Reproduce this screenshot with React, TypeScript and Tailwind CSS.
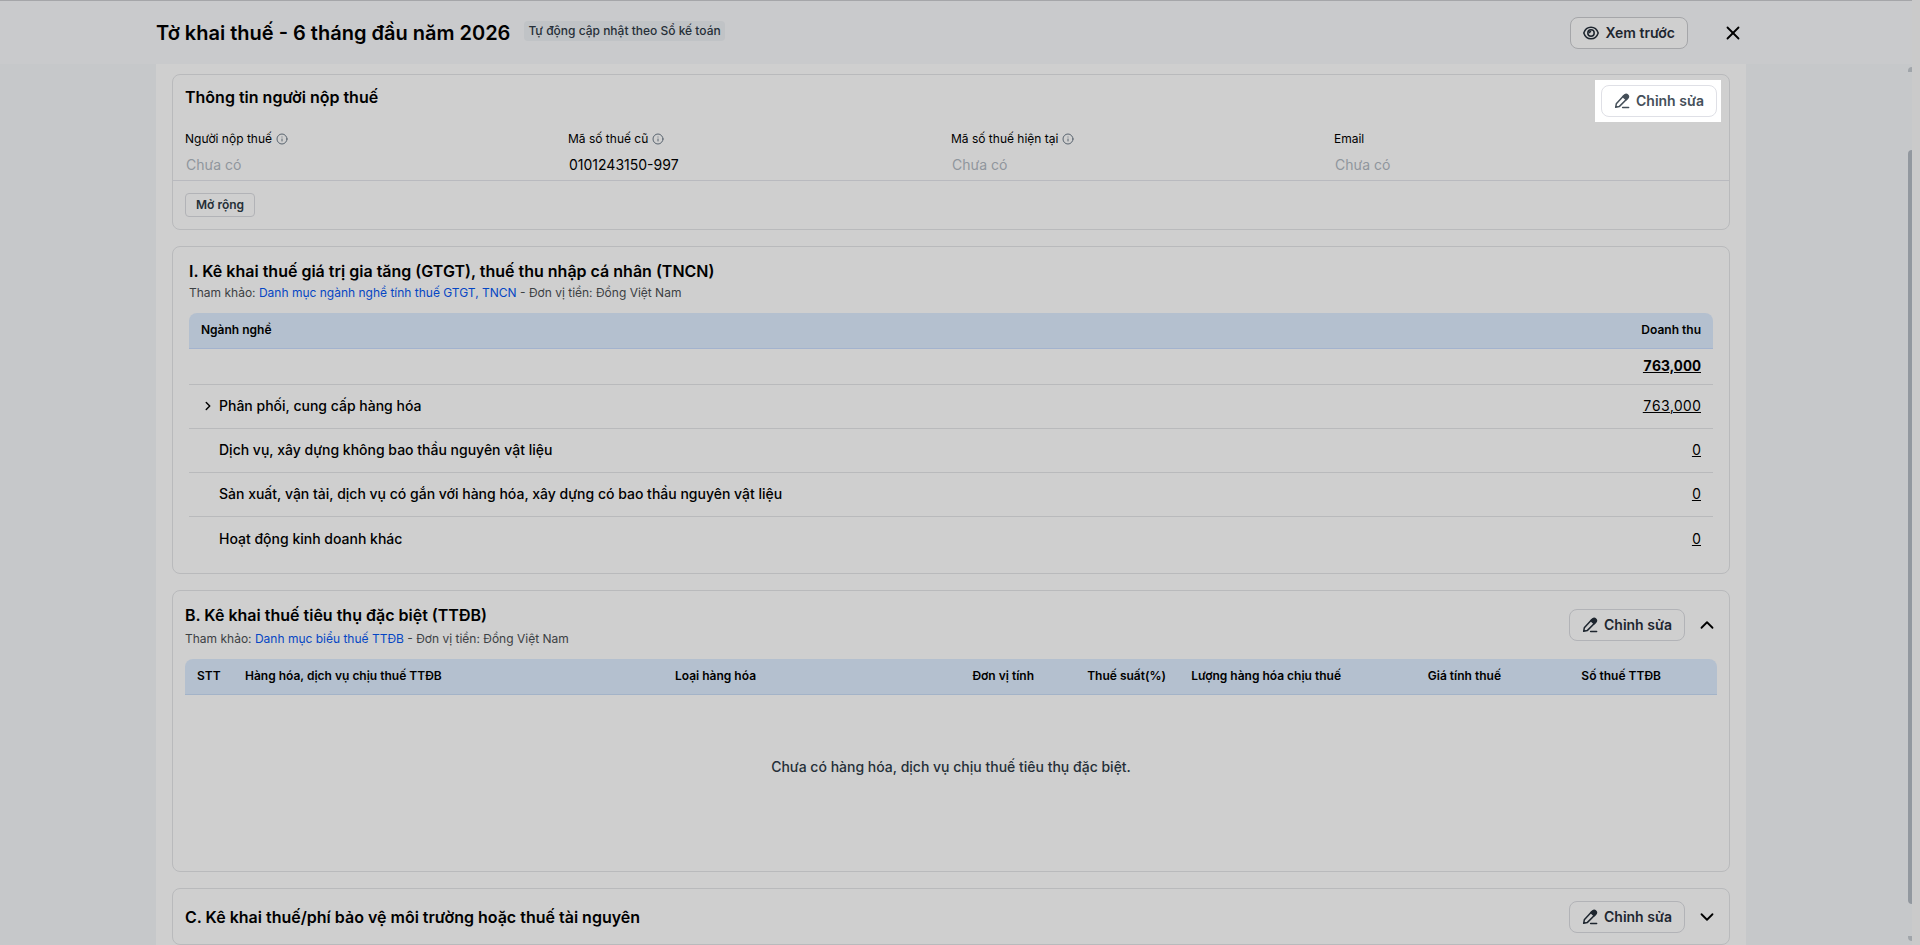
import React from "react";
import { ChevronDown, ChevronRight, ChevronUp, Info, X } from "lucide-react";

const fields = [
    { id: "taxpayer", label: "Người nộp thuế", value: "", info: true },
    { id: "old-code", label: "Mã số thuế cũ", value: "0101243150-997", info: true },
    { id: "new-code", label: "Mã số thuế hiện tại", value: "", info: true },
    { id: "email", label: "Email", value: "", info: false },
];

const industries = [
    { name: "Phân phối, cung cấp hàng hóa", revenue: "763,000", expandable: true },
    { name: "Dịch vụ, xây dựng không bao thầu nguyên vật liệu", revenue: "0", expandable: false },
    { name: "Sản xuất, vận tải, dịch vụ có gắn với hàng hóa, xây dựng có bao thầu nguyên vật liệu", revenue: "0", expandable: false },
    { name: "Hoạt động kinh doanh khác", revenue: "0", expandable: false },
];

const exciseColumns = [
    { title: "STT", style: "w-12 text-left pl-3" },
    { title: "Hàng hóa, dịch vụ chịu thuế TTĐB", style: "text-left pl-3" },
    { title: "Loại hàng hóa", style: "w-60 text-left pl-3" },
    { title: "Đơn vị tính", style: "w-[143px] text-right pr-3" },
    { title: "Thuế suất(%)", style: "w-[132px] text-right pr-3" },
    { title: "Lượng hàng hóa chịu thuế", style: "w-[175px] text-right pr-3" },
    { title: "Giá tính thuế", style: "w-40 text-right pr-3" },
    { title: "Số thuế TTĐB", style: "w-[204px] text-right pr-14" },
];

function PencilIcon() {
    return (
        <svg viewBox="0 0 16 16" className="size-4 shrink-0" fill="none" stroke="currentColor" strokeWidth="1.5" strokeLinejoin="round" strokeLinecap="round" aria-hidden="true">
            <path d="M1.7 14.3 2.3 10.8 9.9 2.6a2.2 2.2 0 0 1 3.2 0 2.2 2.2 0 0 1 0 3.1L5.2 13.6Z" />
            <path d="M9 3.6 10.7 2a2.2 2.2 0 0 1 3.2 3L12.2 6.7Z" fill="currentColor" />
            <path d="M8.6 14.6h6" />
        </svg>
    );
}

function EyeIcon() {
    return (
        <svg viewBox="0 0 16 16" className="size-4 shrink-0" fill="none" stroke="currentColor" strokeWidth="1.5" aria-hidden="true">
            <path d="M.8 8C2 4.300 4.800 2.200 8 2.200S14 4.300 15.200 8C14 11.700 11.200 13.800 8 13.800S2 11.700.8 8Z" />
            <circle cx="8" cy="8" r="3.2" />
            <path d="M6.3 8.3A1.9 1.9 0 0 1 8.2 6.3" />
        </svg>
    );
}

function EditButton({ active = false }: { active?: boolean }) {
    const tone = active ? "border-[#dfe0e6] bg-white text-[#454f59]" : "border-[#b2b3b7] text-[#1e262f]";
    return (
        <button type="button" className={`flex h-8 items-center gap-1.5 rounded-lg border px-3 text-sm font-semibold ${tone}`}>
            <PencilIcon />
            Chỉnh sửa
        </button>
    );
}

function Reference({ link }: { link: string }) {
    return (
        <p className="text-xs text-[#3c4043]">
            Tham khảo: <a href="#" className="text-[#0546c4]">{link}</a> - Đơn vị tiền: Đồng Việt Nam
        </p>
    );
}

function TaxpayerCard() {
    return (
        <section className="rounded-lg border border-[#b9babc]">
            <div className="flex h-12 items-start justify-between pl-3 pr-2">
                <h2 className="pt-2.5 text-base font-semibold">Thông tin người nộp thuế</h2>
                <div className="mt-[5px] bg-white py-[5px] pl-1.5 pr-1">
                    <EditButton active />
                </div>
            </div>
            <div className="grid grid-cols-4 border-b border-[#b9babf] px-3 pb-[5px] pt-1.5">
                {fields.map((f) => (
                    <div key={f.id}>
                        <label htmlFor={f.id} className="flex items-center gap-1 text-xs leading-5">
                            {f.label}
                            {f.info && <Info size={12} strokeWidth={2} className="text-[#59646f]" />}
                        </label>
                        <input
                            id={f.id}
                            readOnly
                            defaultValue={f.value}
                            placeholder="Chưa có"
                            className="mt-1.5 block h-5 w-full bg-transparent px-px text-sm outline-none placeholder:text-[#8f969d]"
                        />
                    </div>
                ))}
            </div>
            <div className="flex p-3">
                <button type="button" className="h-6 rounded border border-[#b2b3b7] px-2.5 text-xs font-semibold text-[#262f38]">
                    Mở rộng
                </button>
            </div>
        </section>
    );
}

function RevenueCard() {
    return (
        <section className="rounded-lg border border-[#b9babc] px-4 py-3">
            <div className="flex flex-col gap-0.5">
                <h2 className="text-base font-semibold">I. Kê khai thuế giá trị gia tăng (GTGT), thuế thu nhập cá nhân (TNCN)</h2>
                <Reference link="Danh mục ngành nghề tính thuế GTGT, TNCN" />
            </div>
            <table className="mt-3 w-full border-separate border-spacing-0">
                <thead>
                    <tr className="h-9 text-xs">
                        <th className="rounded-tl-lg border-b border-[#a3b3ce] bg-[#b4c0cf] px-3 pb-0.5 text-left font-semibold">Ngành nghề</th>
                        <th className="rounded-tr-lg border-b border-[#a3b3ce] bg-[#b4c0cf] px-3 pb-0.5 text-right font-semibold">Doanh thu</th>
                    </tr>
                </thead>
                <tbody className="text-sm">
                    <tr className="h-9">
                        <td className="border-b border-[#b9babc]" />
                        <td className="border-b border-[#b9babc] px-3 pb-0.5 text-right font-bold">
                            <a href="#" className="tabular-nums underline">763,000</a>
                        </td>
                    </tr>
                    {industries.map((row, index) => {
                        const line = index < industries.length - 1 ? "border-b border-[#b9babc] pb-0.5" : "";
                        return (
                            <tr key={row.name} className="h-11">
                                <td className={`pl-3 font-medium ${line}`}>
                                    <span className="flex items-center">
                                        <span className="flex w-[18px]">
                                            {row.expandable && <ChevronRight size={14} strokeWidth={2.5} />}
                                        </span>
                                        {row.name}
                                    </span>
                                </td>
                                <td className={`px-3 text-right ${line}`}>
                                    <a href="#" className="tabular-nums underline">{row.revenue}</a>
                                </td>
                            </tr>
                        );
                    })}
                </tbody>
            </table>
        </section>
    );
}

function ExciseCard() {
    return (
        <section className="rounded-lg border border-[#b9babc] px-3 pt-3">
            <div className="flex items-center justify-between">
                <div className="flex flex-col gap-1">
                    <h2 className="text-base font-semibold">B. Kê khai thuế tiêu thụ đặc biệt (TTĐB)</h2>
                    <Reference link="Danh mục biểu thuế TTĐB" />
                </div>
                <div className="flex items-center gap-3">
                    <EditButton />
                    <button type="button" aria-label="Thu gọn" className="flex size-5 items-center justify-center">
                        <ChevronUp className="size-[22px] shrink-0" />
                    </button>
                </div>
            </div>
            <table className="mt-3 w-full table-fixed border-separate border-spacing-0">
                <thead>
                    <tr className="h-9 text-xs">
                        {exciseColumns.map((col) => (
                            <th key={col.title} className={`whitespace-nowrap border-b border-[#a3b3c8] bg-[#b4c0cf] pb-0.5 font-semibold first:rounded-tl-lg last:rounded-tr-lg ${col.style}`}>
                                {col.title}
                            </th>
                        ))}
                    </tr>
                </thead>
                <tbody>
                    <tr>
                        <td colSpan={8} className="h-[176px] pb-8 text-center text-sm font-medium text-[#262f38]">
                            Chưa có hàng hóa, dịch vụ chịu thuế tiêu thụ đặc biệt.
                        </td>
                    </tr>
                </tbody>
            </table>
        </section>
    );
}

export default function App() {
    return (
        <div className="relative h-screen overflow-hidden bg-[#cacaca] pr-2 font-['Inter',sans-serif] text-black">
            <div className="flex min-h-full flex-col bg-[#c6c8ca]">
                <header className="flex h-16 shrink-0 items-center border-t border-[#a5a6a9] bg-[#c9cacc] pl-[156px] pr-[169px]">
                    <h1 className="text-xl font-semibold">Tờ khai thuế - 6 tháng đầu năm 2026</h1>
                    <span className="mb-1 ml-3.5 rounded bg-[#c0c3c6] px-1 text-xs font-medium leading-5 text-[#262f38]">Tự động cập nhật theo Sổ kế toán</span>
                    <button type="button" className="ml-auto flex h-8 items-center gap-1.5 rounded-lg border border-[#a5a6a9] bg-[#cfcfcf] px-3 text-sm font-semibold text-[#1e262f]">
                        <EyeIcon />
                        Xem trước
                    </button>
                    <button type="button" aria-label="Đóng" className="ml-[35px] flex size-5 items-center justify-center">
                        <X className="size-[22px] shrink-0" />
                    </button>
                </header>
                <main className="ml-[156px] mr-[166px] flex flex-col gap-4 bg-[#cfcfcf] px-4 pt-2.5">
                    <TaxpayerCard />
                    <RevenueCard />
                    <ExciseCard />
                    <section className="flex h-[57px] items-center justify-between rounded-lg border border-[#b9babc] px-3">
                        <h2 className="text-base font-semibold">C. Kê khai thuế/phí bảo vệ môi trường hoặc thuế tài nguyên</h2>
                        <div className="flex items-center gap-3">
                            <EditButton />
                            <button type="button" aria-label="Mở rộng mục C" className="flex size-5 items-center justify-center">
                                <ChevronDown className="size-[22px] shrink-0" />
                            </button>
                        </div>
                    </section>
                </main>
            </div>
            {/* Scrollbar floating over the page edge */}
            <div className="absolute bottom-0 right-2 top-16 flex w-1 flex-col pb-1 pt-[3px]" aria-hidden="true">
                <span className="h-[5px] rounded-tl-full bg-[#a0a5aa]" />
                <span className="mb-8 mt-[78px] flex-1 rounded-l-sm bg-[#92989f]" />
                <span className="h-[5px] rounded-bl-full bg-[#a0a5aa]" />
            </div>
        </div>
    );
}
